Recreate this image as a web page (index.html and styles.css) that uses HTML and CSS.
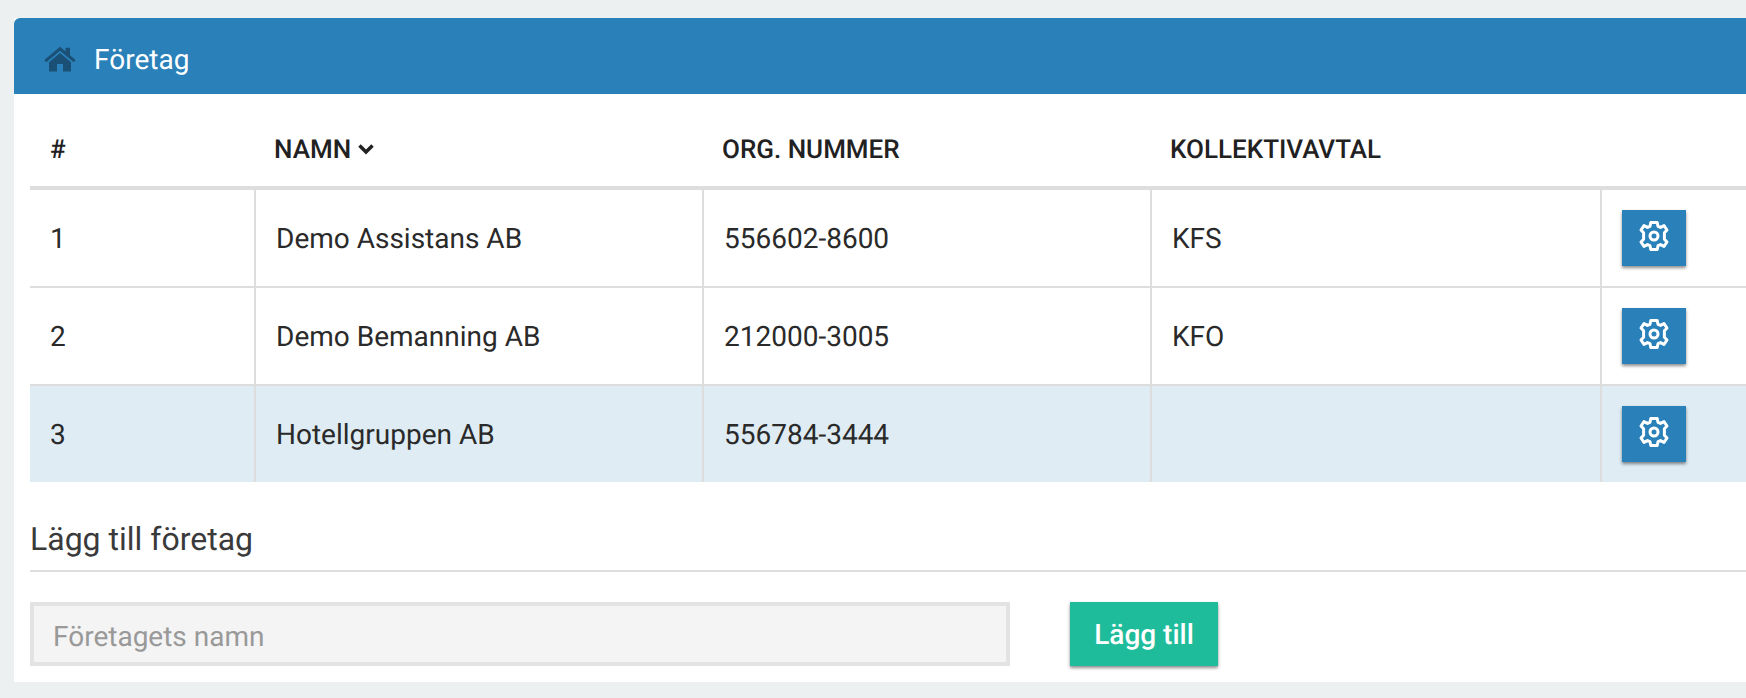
FILE: index.html
```html
<!DOCTYPE html>
<html lang="sv">
<head>
<meta charset="utf-8">
<title>Företag</title>
<link rel="stylesheet" href="styles.css">
</head>
<body>
<section class="panel">
  <header class="panel-head">
    <svg class="home" viewBox="0 0 32 26" aria-hidden="true"><path d="M16 .8 .3 14 2.200 16.200 16 4.700 29.800 16.200 31.700 14 26 9.200V1.800H21.500V5.400Z"/><path d="M16 7 5 16.200V25.500H13V18H19V25.500H27V16.200Z"/></svg>
    <h1>Företag</h1>
  </header>
  <div class="panel-body">
    <table class="grid">
      <colgroup><col class="c1"><col class="c2"><col class="c3"><col class="c4"><col class="c5"></colgroup>
      <thead>
        <tr><th>#</th><th>NAMN <svg class="chev" viewBox="0 0 16 12" aria-hidden="true"><path d="M1.500 2.500 8 9 14.500 2.500"/></svg></th><th>ORG. NUMMER</th><th>KOLLEKTIVAVTAL</th><th></th></tr>
      </thead>
      <tbody>
        <tr><td>1</td><td>Demo Assistans AB</td><td>556602-8600</td><td>KFS</td><td><button class="gear-btn"><svg viewBox="0 0 32 32" aria-hidden="true"><use href="#gear"/></svg></button></td></tr>
        <tr><td>2</td><td>Demo Bemanning AB</td><td>212000-3005</td><td>KFO</td><td><button class="gear-btn"><svg viewBox="0 0 32 32" aria-hidden="true"><use href="#gear"/></svg></button></td></tr>
        <tr class="selected"><td>3</td><td>Hotellgruppen AB</td><td>556784-3444</td><td></td><td><button class="gear-btn"><svg viewBox="0 0 32 32" aria-hidden="true"><use href="#gear"/></svg></button></td></tr>
      </tbody>
    </table>
    <h2>Lägg till företag</h2>
    <form class="add-form">
      <input type="text" placeholder="Företagets namn">
      <button type="button" class="add-btn">Lägg till</button>
    </form>
  </div>
</section>
<svg class="defs" aria-hidden="true"><defs><g id="gear"><path fill="none" stroke="#fff" stroke-width="3" stroke-linejoin="round" d="M12.800 2.500H19.200L20 6.300 22.500 7.400 26 5.600 29 10 26.400 12.800V19.200L29 22 26 26.400 22.500 24.600 20 25.700 19.200 29.500H12.800L12 25.700 9.500 24.600 6 26.400 3 22 5.600 19.200V12.800L3 10 6 5.600 9.500 7.400 12 6.300Z"/><circle cx="16" cy="16" r="4" fill="none" stroke="#fff" stroke-width="3"/></g></defs></svg>
</body>
</html>
```
FILE: styles.css
```css
* { box-sizing: border-box; }
html, body { margin: 0; height: 698px; overflow: hidden; }
body { background: #ecf0f1; padding: 18px 0 0 14px; font-family: Roboto, sans-serif; color: #212121; text-rendering: geometricPrecision; }
.panel { height: 664px; background: #fff; }
.panel-head { height: 76px; background: #2a80b9; border-radius: 6px 0 0 0; display: flex; align-items: center; padding: 6px 0 0 30px; gap: 18px; }
.home { width: 32px; height: 26px; fill: #1a5076; }
h1 { margin: 0; font-size: 28px; font-weight: 400; color: #fff; }
.panel-body { padding-left: 16px; }
.grid { border-collapse: separate; border-spacing: 0; table-layout: fixed; width: 100%; font-size: 28px; }
.c1 { width: 226px; } .c2 { width: 448px; } .c3 { width: 448px; } .c4 { width: 450px; }
th { height: 96px; padding: 20px 20px 0 18px; text-align: left; font-size: 26px; font-weight: 500; border-bottom: 4px solid #ddd; }
th:first-child { padding-left: 20px; }
td { height: 98px; padding: 0 20px; color: #2a2a2a; border-right: 2px solid #ddd; border-bottom: 2px solid #ddd; }
td:last-child { border-right: 0; }
.selected td { height: 96px; background: #dfecf4; border-bottom: 0; }
.chev { width: 16px; height: 12px; fill: none; stroke: #212121; stroke-width: 3.500; vertical-align: 3px; }
.gear-btn { display: flex; align-items: center; justify-content: center; width: 64px; height: 56px; padding: 0 0 5px; border: 0; background: #2a80b9; box-shadow: 0 2px 3px rgba(0,0,0,.45); }
.gear-btn svg { display: block; width: 32px; height: 32px; }
h2 { margin: 0; height: 90px; padding-top: 37px; font-size: 32px; line-height: 40px; font-weight: 400; color: #3a3a3a; border-bottom: 2px solid #ddd; }
.add-form { display: flex; margin-top: 30px; gap: 60px; }
input { width: 980px; height: 64px; padding: 4px 20px 0 19px; border: 4px solid #e3e3e3; background: #f4f4f4; font: 400 28px Roboto, sans-serif; text-rendering: geometricPrecision; }
input::placeholder { color: #999; opacity: 1; }
.add-btn { width: 148px; height: 64px; border: 0; padding: 0; background: #1fbc9b; color: #fff; font: 500 28px Roboto, sans-serif; text-rendering: geometricPrecision; box-shadow: 0 2px 3px rgba(0,0,0,.45); }
.defs { position: absolute; width: 0; height: 0; }
```
